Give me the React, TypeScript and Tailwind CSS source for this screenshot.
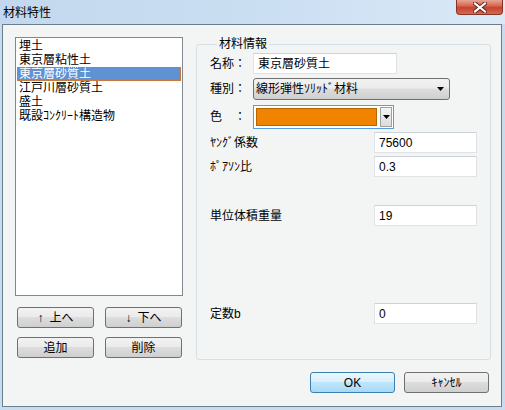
import React from 'react';

const items = ['埋土', '東京層粘性土', '東京層砂質土', '江戸川層砂質土', '盛土', '既設ｺﾝｸﾘｰﾄ構造物'];

function WinButton({ children, className = '', primary = false }: { children: React.ReactNode; className?: string; primary?: boolean }) {
  return (
    <div
      className={
        'h-[21px] rounded-[3px] border flex items-center justify-center leading-[14px] ' +
        (primary
          ? 'border-[#3c7fb1] bg-[linear-gradient(#eaf6fd_0%,#d9f0fc_45%,#bee6fd_50%,#a7d9f5_100%)] '
          : 'border-[#707070] bg-[linear-gradient(#f2f2f2_0%,#ebebeb_45%,#dddddd_50%,#cfcfcf_100%)] ') +
        className
      }
    >
      {children}
    </div>
  );
}

function TextBox({ value, className = '' }: { value: string; className?: string }) {
  return (
    <div className={'h-[21px] bg-white border border-[#dfe3e8] border-t-[#cdd2d8] pl-[4px] flex items-center leading-[14px] ' + className}>
      {value}
    </div>
  );
}

function Arrow() {
  return (
    <svg width="7" height="4" viewBox="0 0 7 4">
      <path d="M0 0H7L3.5 4Z" fill="#000" />
    </svg>
  );
}

export default function App() {
  return (
    <div className="w-[505px] h-[410px] bg-[#c8dcf0] flex flex-col overflow-hidden text-[12px] text-black font-['Liberation_Sans','Noto_Sans_CJK_JP',sans-serif]">
      {/* title bar */}
      <div className="h-[24px] flex items-start bg-[linear-gradient(90deg,#c3d8ee,#cadef2_50%,#dbe9f7)]">
        <span className="ml-[3px] mt-[4px] leading-[16px] text-[12px] font-['Noto_Sans_CJK_JP',sans-serif]">材料特性</span>
        <div className="ml-auto mr-[2px] w-[47px] h-[15px] rounded-b-[4px] border border-t-0 border-[#8a3226] bg-[linear-gradient(#e8a494_0%,#d86a55_40%,#c7422e_55%,#d46a52_100%)] flex items-center justify-center">
          <svg width="14" height="11" viewBox="0 0 14 11">
            <path d="M2 1.5L12 9.5M12 1.5L2 9.5" stroke="#5a2018" strokeWidth="4" strokeLinecap="square" />
            <path d="M2 1.5L12 9.5M12 1.5L2 9.5" stroke="#ffffff" strokeWidth="2.2" strokeLinecap="square" />
          </svg>
        </div>
      </div>

      {/* client area */}
      <div className="flex-1 ml-[2px] mr-[3px] mb-[3px] border border-[#6c7d8e] bg-[#f3f5f4] flex flex-col">
        <div className="flex pt-[12px] pl-[12px]">
          {/* left column */}
          <div className="w-[168px] flex flex-col">
            <div className="h-[259px] bg-white border border-[#828790] p-[1px] leading-[14px]">
              {items.map((it, i) => (
                <div
                  key={it}
                  className={
                    'h-[14px] pl-[2px] whitespace-nowrap ' +
                    (i === 2 ? 'bg-[#5f91d3] text-white outline outline-1 outline-dotted outline-[#c8783a] -outline-offset-1' : '')
                  }
                >
                  {it}
                </div>
              ))}
            </div>
            <div className="flex mt-[11px] pl-[2px] gap-[11px]">
              <WinButton className="w-[77px] gap-[6px]">
                <span>↑</span>
                <span>上へ</span>
              </WinButton>
              <WinButton className="w-[77px] gap-[6px]">
                <span>↓</span>
                <span>下へ</span>
              </WinButton>
            </div>
            <div className="flex mt-[9px] pl-[2px] gap-[11px]">
              <WinButton className="w-[77px]">追加</WinButton>
              <WinButton className="w-[77px]">削除</WinButton>
            </div>
          </div>

          {/* group box */}
          <fieldset className="ml-[13px] w-[295px] h-[323px] border border-[#d5dfe5] rounded-[3px] pl-[13px]">
            <legend className="ml-[7px] px-[2px] leading-[14px]">材料情報</legend>
            <div className="flex items-center mt-[2px] h-[21px]">
              <span className="w-[43px]">名称：</span>
              <TextBox value="東京層砂質土" className="w-[144px]" />
            </div>
            <div className="flex items-center mt-[4px] h-[22px]">
              <span className="w-[43px]">種別：</span>
              <div className="w-[197px] h-[22px] rounded-[3px] border border-[#707070] bg-[linear-gradient(#f2f2f2_0%,#ebebeb_45%,#dddddd_50%,#cfcfcf_100%)] flex items-center pl-[2px] pr-[5px] leading-[14px]">
                <span className="flex-1">線形弾性ｿﾘｯﾄﾞ材料</span>
                <Arrow />
              </div>
            </div>
            <div className="flex items-center mt-[5px] h-[24px]">
              <span className="w-[43px]">色　：</span>
              <div className="w-[141px] h-[24px] border border-[#569de5] bg-white flex items-center pl-[2px] pr-[1px]">
                <div className="w-[121px] h-[18px] bg-[#f08300] border border-[#b86400]" />
                <div className="ml-auto w-[12px] h-[20px] border border-[#a0a0a0] bg-[linear-gradient(#f4f4f4,#dcdcdc)] flex items-center justify-center">
                  <Arrow />
                </div>
              </div>
            </div>
            <div className="flex items-center mt-[3px] h-[21px]">
              <span className="w-[164px]">ﾔﾝｸﾞ係数</span>
              <TextBox value="75600" className="w-[103px]" />
            </div>
            <div className="flex items-center mt-[3px] h-[21px]">
              <span className="w-[164px]">ﾎﾟｱｿﾝ比</span>
              <TextBox value="0.3" className="w-[103px]" />
            </div>
            <div className="flex items-center mt-[28px] h-[21px]">
              <span className="w-[164px]">単位体積重量</span>
              <TextBox value="19" className="w-[103px]" />
            </div>
            <div className="flex items-center mt-[77px] h-[21px]">
              <span className="w-[164px]">定数b</span>
              <TextBox value="0" className="w-[103px]" />
            </div>
          </fieldset>
        </div>

        <div className="flex justify-end gap-[9px] mt-[12px] pr-[12px]">
          <WinButton primary className="w-[85px]">OK</WinButton>
          <WinButton className="w-[85px]">ｷｬﾝｾﾙ</WinButton>
        </div>
      </div>
    </div>
  );
}
